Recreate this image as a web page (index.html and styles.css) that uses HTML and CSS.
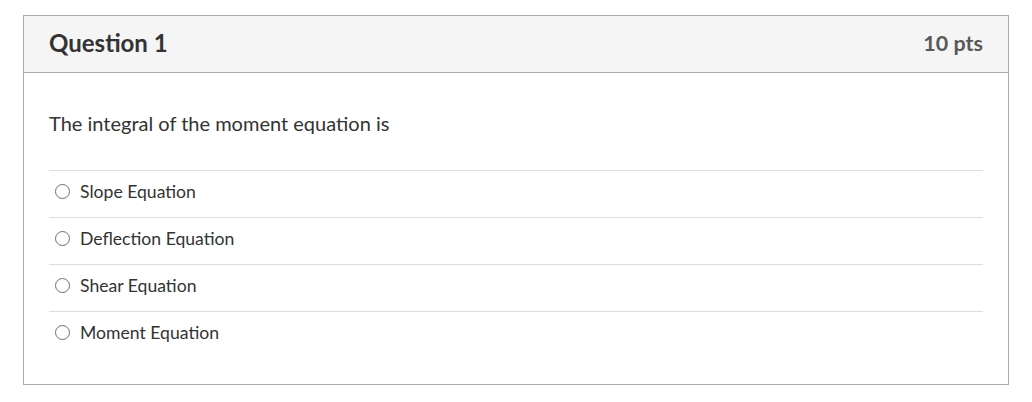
FILE: index.html
```html
<!DOCTYPE html>
<html lang="en">
<head>
<meta charset="utf-8">
<title>Question 1</title>
<link rel="stylesheet" href="styles.css">
</head>
<body>
<div class="quiz">
  <div class="question">
    <div class="question-header">
      <h2 class="question-title">Question 1</h2>
      <span class="question-points">10 pts</span>
    </div>
    <div class="question-body">
      <p class="question-text">The integral of the moment equation is</p>
      <ul class="answers">
        <li class="answer"><span class="radio"></span><span class="answer-label">Slope Equation</span></li>
        <li class="answer"><span class="radio"></span><span class="answer-label">Deflection Equation</span></li>
        <li class="answer"><span class="radio"></span><span class="answer-label">Shear Equation</span></li>
        <li class="answer"><span class="radio"></span><span class="answer-label">Moment Equation</span></li>
      </ul>
    </div>
  </div>
</div>
</body>
</html>
```

FILE: styles.css
```css
html, body {
  margin: 0;
  padding: 0;
  background: #ffffff;
}

body {
  font-family: Lato, "Open Sans", "Liberation Sans", sans-serif;
  color: #333333;
}

.quiz {
  padding: 15px 23px;
}

.question {
  border: 1px solid #aaaaaa;
  background: #ffffff;
}

.question-header {
  display: flex;
  justify-content: space-between;
  align-items: center;
  height: 53px;
  padding: 0 25px 3px;
  background: #f5f5f5;
  border-bottom: 1px solid #aaaaaa;
}

.question-title {
  margin: 0;
  font-size: 24px;
  font-weight: 700;
  color: #333333;
}

.question-points {
  font-size: 21.5px;
  font-weight: 700;
  color: #595959;
}

.question-body {
  padding: 37px 25px 26px;
}

.question-text {
  margin: 0 0 33px;
  font-size: 20px;
  line-height: 27px;
  color: #333333;
}

.answers {
  list-style: none;
  margin: 0;
  padding: 0;
}

.answer {
  display: flex;
  align-items: center;
  gap: 10px;
  height: 40px;
  padding: 0 0 6px 6px;
  border-top: 1px solid #dddddd;
}

.radio {
  width: 13px;
  height: 13px;
  border: 1px solid #6f6f6f;
  border-radius: 50%;
  background: #ffffff;
  flex: none;
}

.answer-label {
  font-size: 17.6px;
  color: #333333;
}
```
